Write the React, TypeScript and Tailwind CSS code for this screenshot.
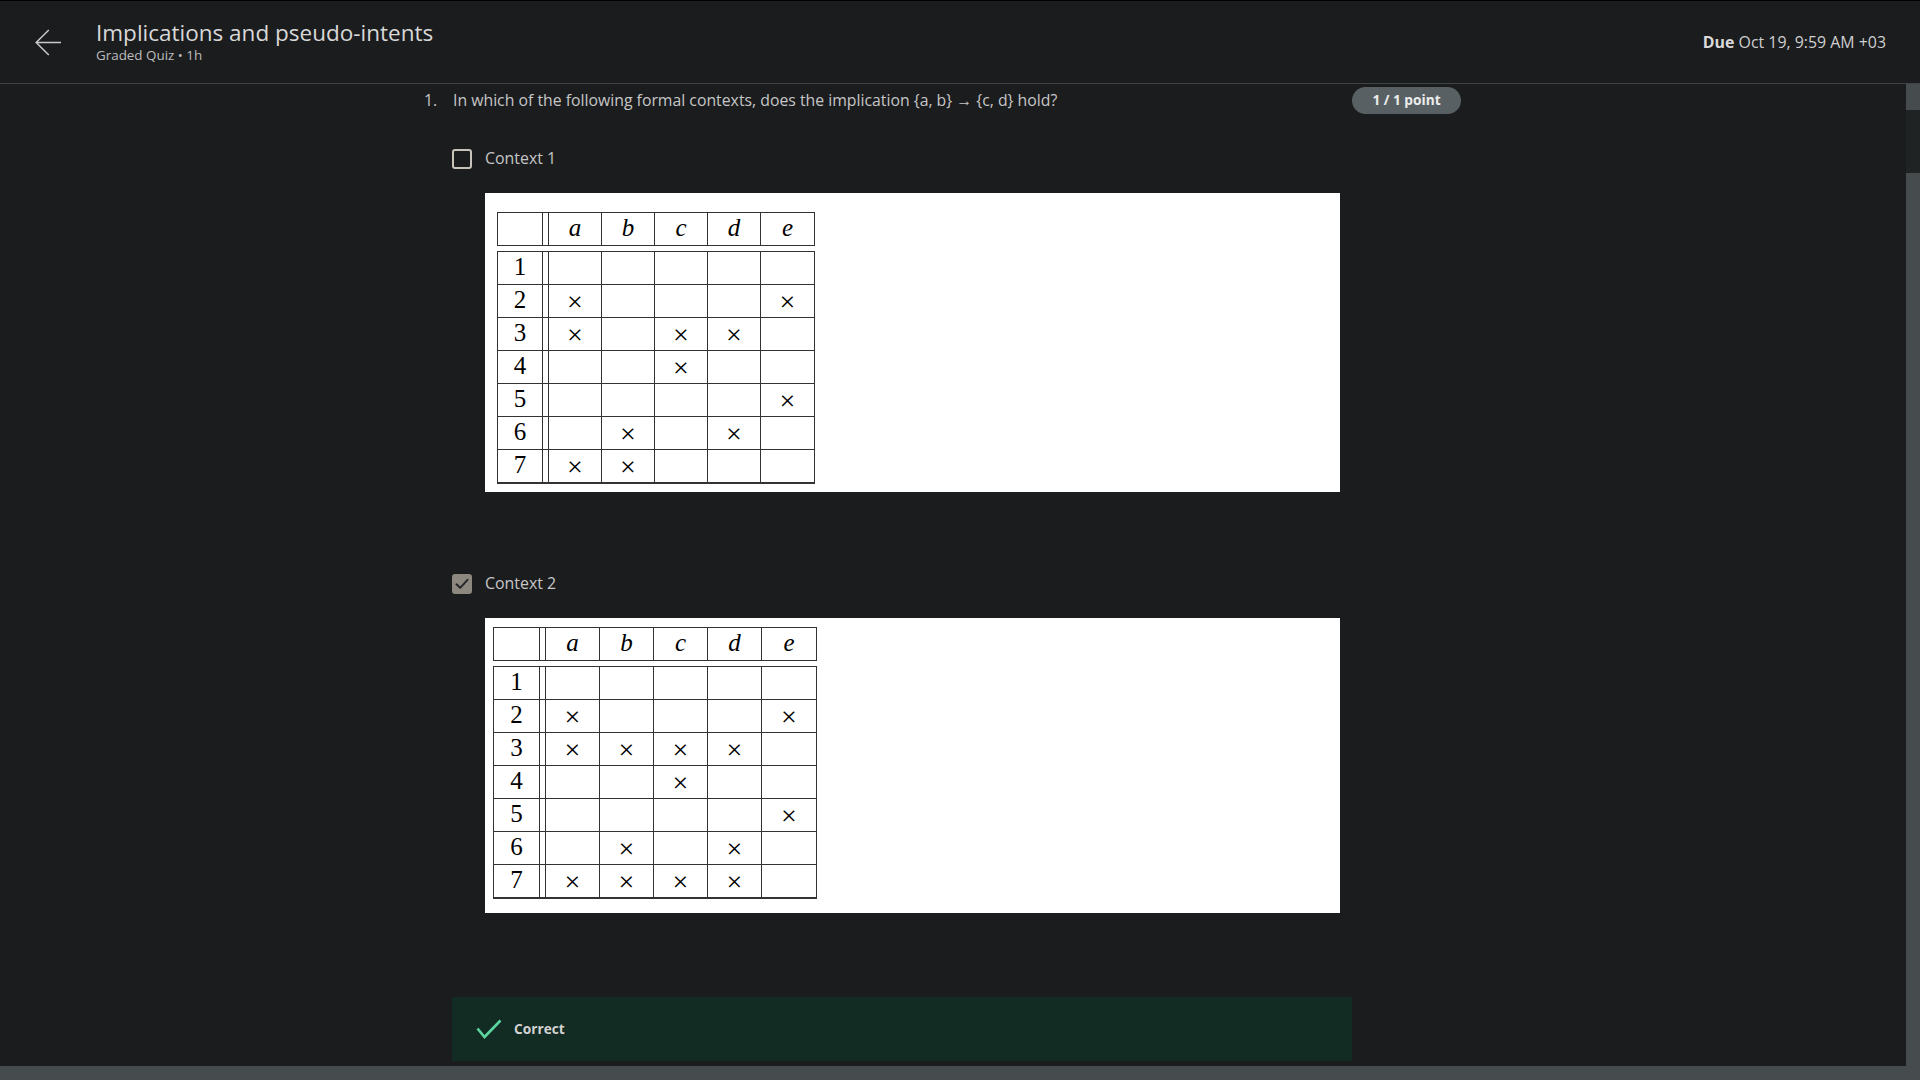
import React from "react";

type Row = { n: string; x: string[] };

const T1: Row[] = [
  { n: "1", x: [] },
  { n: "2", x: ["a", "e"] },
  { n: "3", x: ["a", "c", "d"] },
  { n: "4", x: ["c"] },
  { n: "5", x: ["e"] },
  { n: "6", x: ["b", "d"] },
  { n: "7", x: ["a", "b"] },
];

const T2: Row[] = [
  { n: "1", x: [] },
  { n: "2", x: ["a", "e"] },
  { n: "3", x: ["a", "b", "c", "d"] },
  { n: "4", x: ["c"] },
  { n: "5", x: ["e"] },
  { n: "6", x: ["b", "d"] },
  { n: "7", x: ["a", "b", "c", "d"] },
];

const COLS = ["a", "b", "c", "d", "e"];

function ContextTable({
  rows,
  labelW,
  colW,
}: {
  rows: Row[];
  labelW: string;
  colW: string;
}) {
  const serif = { fontFamily: '"Liberation Serif", "DejaVu Serif", serif' };
  return (
    <div className="flex w-fit flex-col text-black" style={serif}>
      <div className="flex h-[34px] border border-[#333333]">
        <div className={`${labelW} border-r border-[#333333]`} />
        <div className="w-[6px] border-r border-[#333333]" />
        {COLS.map((c, i) => (
          <div
            key={c}
            className={`${colW} flex items-center justify-center text-[25px] italic leading-none ${
              i < 4 ? "border-r border-[#333333]" : ""
            }`}
          >
            <span className="-mt-[4px]">{c}</span>
          </div>
        ))}
      </div>
      <div className="mt-[5px] flex flex-col border-x border-t border-b-2 border-[#333333]">
        {rows.map((r, ri) => (
          <div
            key={r.n}
            className={`flex ${ri < rows.length - 1 ? "h-[33px] border-b border-[#333333]" : "h-[32px]"}`}
          >
            <div
              className={`${labelW} flex items-center justify-center border-r border-[#333333] text-[25px] leading-none`}
            >
              <span className="-mt-[4px]">{r.n}</span>
            </div>
            <div className="w-[6px] border-r border-[#333333]" />
            {COLS.map((c, i) => (
              <div
                key={c}
                className={`${colW} flex items-center justify-center text-[28px] leading-none ${
                  i < 4 ? "border-r border-[#333333]" : ""
                }`}
              >
                {r.x.includes(c) ? <span className="mt-[1px]">×</span> : null}
              </div>
            ))}
          </div>
        ))}
      </div>
    </div>
  );
}

function Checkbox({ checked }: { checked: boolean }) {
  if (checked) {
    return (
      <div className="flex h-[20px] w-[20px] shrink-0 items-center justify-center rounded-[3px] bg-[#8d887f]">
        <svg width="14" height="12" viewBox="0 0 14 12" fill="none">
          <path d="M1.5 6.2 L5.2 9.8 L12.5 1.8" stroke="#25272a" strokeWidth="2" strokeLinecap="round" strokeLinejoin="round" />
        </svg>
      </div>
    );
  }
  return <div className="h-[20px] w-[20px] shrink-0 rounded-[3px] border-2 border-[#c9c4bb]" />;
}

export default function App() {
  const ui = { fontFamily: '"Open Sans", "Noto Sans", Arial, sans-serif' };
  return (
    <div className="flex h-[1080px] w-[1920px] flex-col overflow-hidden bg-[#1b1c1e]" style={ui}>
      {/* Header */}
      <header className="flex h-[84px] shrink-0 items-center border-t border-b border-t-black border-b-[#414447] bg-[#1b1c1e]">
        <div className="ml-[35px] flex h-[27px] w-[27px] items-center justify-center">
          <svg width="27" height="27" viewBox="0 0 27 27" fill="none">
            <path d="M26 13.5 H1.2 M13.8 1 L1.2 13.5 L13.8 26" stroke="#c9c9c9" strokeWidth="1.5" />
          </svg>
        </div>
        <div className="ml-[34px] -mt-[2px] flex flex-col">
          <div className="text-[22.5px] leading-[28px] text-[#d8d8d8]">Implications and pseudo-intents</div>
          <div className="text-[13.4px] leading-[17px] text-[#bdbdbd]">Graded Quiz • 1h</div>
        </div>
        <div className="ml-auto mr-[34px] mt-[1px] text-[15.9px] text-[#cfcfcf]">
          <span className="font-bold text-[#dadada]">Due</span> Oct 19, 9:59 AM +03
        </div>
      </header>

      {/* Main */}
      <div className="flex min-h-0 flex-1">
        <div className="min-w-0 flex-1 overflow-hidden">
          <div className="pl-[418px] pt-[3px]">
            <div className="flex w-[1043px] items-center">
              <div className="w-[35px] pl-[6px] text-[15.8px] text-[#c6c6c6]">1.</div>
              <div className="flex-1 text-[15.8px] text-[#c6c6c6]">
                In which of the following formal contexts, does the implication {"{a, b}"} → {"{c, d}"} hold?
              </div>
              <div className="flex h-[27px] w-[109px] items-center justify-center rounded-full bg-[#596063] text-[13.7px] font-bold text-[#ececec]">
                1 / 1 point
              </div>
            </div>

            <div className="pl-[34px]">
              <div className="mt-[35px] flex h-[20px] items-center gap-[13px] leading-none">
                <Checkbox checked={false} />
                <span className="text-[15.9px] text-[#c6c6c6]">Context 1</span>
              </div>
              <div className="ml-[33px] mt-[24px] h-[299px] w-[855px] bg-white pl-[12px] pt-[19px]">
                <ContextTable rows={T1} labelW="w-[45px]" colW="w-[53px]" />
              </div>

              <div className="mt-[82px] flex h-[20px] items-center gap-[13px] leading-none">
                <Checkbox checked={true} />
                <span className="text-[15.9px] text-[#c6c6c6]">Context 2</span>
              </div>
              <div className="ml-[33px] mt-[24px] h-[295px] w-[855px] bg-white pl-[8px] pt-[9px]">
                <ContextTable rows={T2} labelW="w-[46px]" colW="w-[54px]" />
              </div>

              <div className="mt-[84px] flex h-[64px] w-[900px] items-center bg-[#122b23]">
                <svg className="ml-[24px]" width="26" height="20" viewBox="0 0 26 20" fill="none">
                  <path d="M1.5 9.5 L8.5 18 L24.5 1.5" stroke="#5cd5a0" strokeWidth="2.6" />
                </svg>
                <span className="ml-[12px] text-[13.7px] font-bold text-[#d2d2d2]">Correct</span>
              </div>
            </div>
          </div>
        </div>
        {/* vertical scrollbar */}
        <div className="flex w-[14px] shrink-0 flex-col bg-[#464b4e]">
          <div className="h-[26px]" />
          <div className="h-[63px] bg-[#1f2324]" />
        </div>
      </div>
      {/* horizontal scrollbar */}
      <div className="h-[14px] shrink-0 bg-[#464b4e]" />
    </div>
  );
}
